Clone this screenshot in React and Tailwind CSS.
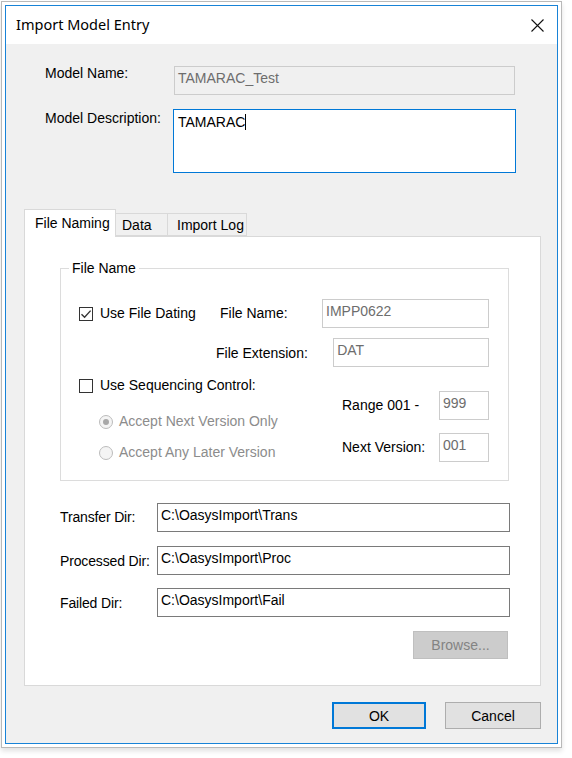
import React from 'react'

const ui = { fontFamily: '"Liberation Sans", Arial, sans-serif' }

function Field({ children, className = '', disabled = false }) {
  return (
    <div
      className={
        'h-[29px] border px-[3px] pt-[3px] text-[14px] leading-[16px] whitespace-nowrap overflow-hidden ' +
        (disabled ? 'border-[#cccccc] text-[#6d6d6d] ' : 'border-[#7a7a7a] bg-white text-black ') +
        className
      }
    >
      {children}
    </div>
  )
}

function Check({ checked, label }) {
  return (
    <div className="flex items-center gap-[7px]">
      <span className="w-[14px] h-[14px] border border-[#333333] bg-white flex items-center justify-center">
        {checked && (
          <svg width="12" height="12" viewBox="0 0 12 12">
            <path d="M1.5 6.2 L4.6 9.2 L10.6 2.6" fill="none" stroke="#333333" strokeWidth="1.4" />
          </svg>
        )}
      </span>
      <span className="text-[14px] leading-[16px] mt-[-2px]">{label}</span>
    </div>
  )
}

function Radio({ selected, label }) {
  return (
    <div className="flex items-center gap-[6px] ml-[20px]">
      <span className="w-[14px] h-[14px] rounded-full border border-[#bcbcbc] bg-[#f4f4f4] flex items-center justify-center">
        {selected && <span className="w-[6px] h-[6px] rounded-full bg-[#a8a8a8]" />}
      </span>
      <span className="text-[14px] leading-[16px] text-[#8c8c8c] mt-[-2px]">{label}</span>
    </div>
  )
}

export default function App() {
  return (
    <div className="w-[572px] h-[758px] bg-white text-black" style={ui}>
      {/* window frame */}
      <div className="ml-[1px] mt-[1px] w-[561px] h-[747px] border border-[#b9b9b9] p-[3px] bg-white shadow-[0_3px_5px_rgba(0,0,0,0.12)]">
        <div className="w-full h-full border border-[#1883d7] flex flex-col">
          {/* title bar */}
          <div className="h-[38px] bg-white flex items-center justify-between pl-[10px] pr-[13px]">
            <span
              className="text-[14.5px] text-black"
              style={{ fontFamily: '"Noto Sans", "Open Sans", sans-serif' }}
            >
              Import Model Entry
            </span>
            <svg width="13" height="13" viewBox="0 0 13 13">
              <path d="M0.5 0.5 L12.5 12.5 M12.5 0.5 L0.5 12.5" stroke="#111111" strokeWidth="1.1" />
            </svg>
          </div>

          {/* body */}
          <div className="flex-1 bg-[#f0f0f0] pl-[18px] pr-[16px] flex flex-col">
            {/* model name */}
            <div className="flex items-start mt-[22px] pl-[21px]">
              <span className="w-[128px] text-[14px] leading-[16px] mt-[-1px]">Model Name:</span>
              <Field disabled className="w-[341px] ml-[1px] pt-[1px]">TAMARAC_Test</Field>
            </div>

            {/* model description */}
            <div className="flex items-start mt-[14px] pl-[21px]">
              <span className="w-[128px] text-[14px] leading-[16px] mt-[1px]">Model Description:</span>
              <div className="w-[343px] h-[64px] border border-[#0078d7] bg-white px-[4px] pt-[4px] text-[14px] leading-[16px] flex items-start">
                <span>TAMARAC</span>
                <span className="w-[1px] h-[16px] bg-black" />
              </div>
            </div>

            {/* tabs */}
            <div className="flex items-end mt-[36px] h-[27px] relative z-10">
              <div className="h-[28px] w-[92px] border border-b-0 border-[#d9d9d9] bg-white pl-[10px] pt-[5px] text-[14px] leading-[16px] mb-[-1px]">
                File Naming
              </div>
              <div className="h-[23px] w-[52px] border border-l-0 border-[#d9d9d9] bg-[#f0f0f0] pl-[6px] pt-[3px] text-[14px] leading-[16px]">
                Data
              </div>
              <div className="h-[23px] w-[79px] border border-l-0 border-[#d9d9d9] bg-[#f0f0f0] pl-[9px] pt-[3px] text-[14px] leading-[16px]">
                Import Log
              </div>
            </div>

            {/* tab panel */}
            <div className="w-[517px] h-[450px] border border-[#d9d9d9] bg-white flex flex-col pl-[35px]">
              {/* group box */}
              <div className="relative mt-[31px] w-[449px] h-[213px] border border-[#dcdcdc] pl-[18px] pr-[19px] flex flex-col">
                <span className="absolute left-[8px] top-[-9px] bg-white px-[3px] text-[14px] leading-[16px]">
                  File Name
                </span>

                <div className="flex items-center mt-[30px]">
                  <div className="w-[141px]">
                    <Check checked label="Use File Dating" />
                  </div>
                  <span className="w-[102px] text-[14px] leading-[16px] mt-[-2px]">File Name:</span>
                  <Field disabled className="w-[167px]">IMPP0622</Field>
                </div>

                <div className="flex items-center mt-[10px]">
                  <span className="w-[263px] pl-[137px] text-[14px] leading-[16px] mt-[1px]">File Extension:</span>
                  <Field disabled className="w-[167px]">DAT</Field>
                </div>

                <div className="flex">
                  <div className="w-[263px] flex flex-col">
                    <div className="mt-[12px]">
                      <Check label="Use Sequencing Control:" />
                    </div>
                    <div className="mt-[22px]">
                      <Radio selected label="Accept Next Version Only" />
                    </div>
                    <div className="mt-[17px]">
                      <Radio label="Accept Any Later Version" />
                    </div>
                  </div>
                  <div className="flex flex-col">
                    <div className="flex items-center mt-[24px]">
                      <span className="w-[97px] text-[14px] leading-[16px] mt-[-1px]">Range 001 -</span>
                      <Field disabled className="w-[50px]">999</Field>
                    </div>
                    <div className="flex items-center mt-[13px]">
                      <span className="w-[97px] text-[14px] leading-[16px] mt-[-2px]">Next Version:</span>
                      <Field disabled className="w-[50px]">001</Field>
                    </div>
                  </div>
                </div>
              </div>

              {/* directories */}
              <div className="flex items-center mt-[22px]">
                <span className="w-[97px] text-[14px] leading-[16px] tracking-[-0.15px] mt-[-1px]">Transfer Dir:</span>
                <Field className="w-[353px] pt-[2px]">C:\OasysImport\Trans</Field>
              </div>
              <div className="flex items-center mt-[14px]">
                <span className="w-[97px] text-[14px] leading-[16px] tracking-[-0.15px]">Processed Dir:</span>
                <Field className="w-[353px] pt-[2px]">C:\OasysImport\Proc</Field>
              </div>
              <div className="flex items-center mt-[13px]">
                <span className="w-[97px] text-[14px] leading-[16px] tracking-[-0.15px]">Failed Dir:</span>
                <Field className="w-[353px] pt-[2px]">C:\OasysImport\Fail</Field>
              </div>

              <div className="flex mt-[14px] pl-[353px]">
                <button className="w-[95px] h-[28px] border border-[#bfbfbf] bg-[#cccccc] text-[#838383] text-[14px] leading-[16px]">
                  Browse...
                </button>
              </div>
            </div>

            {/* dialog buttons */}
            <div className="flex justify-end gap-[19px] mt-[16px] w-[517px]">
              <button className="w-[94px] h-[27px] border-2 border-[#0078d7] bg-[#e1e1e1] text-[14px] leading-[16px]">
                OK
              </button>
              <button className="w-[96px] h-[27px] border border-[#adadad] bg-[#e1e1e1] text-[14px] leading-[16px]">
                Cancel
              </button>
            </div>
          </div>
        </div>
      </div>
    </div>
  )
}
